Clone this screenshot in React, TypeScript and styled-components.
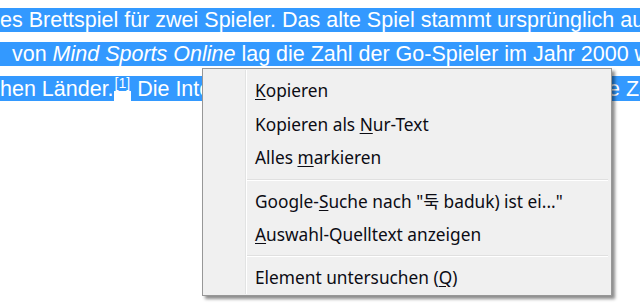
import React from "react";
import styled, { createGlobalStyle } from "styled-components";

const GlobalStyle = createGlobalStyle`
  html, body {
    margin: 0;
    padding: 0;
    background: #ffffff;
    overflow: hidden;
  }
`;

const Page = styled.div`
  position: relative;
  width: 640px;
  height: 308px;
  overflow: hidden;
  background: #ffffff;
`;

const Article = styled.div`
  padding-top: 8px;
  font-family: "Liberation Sans", Arial, sans-serif;
  font-size: 21.5px;
  color: #ffffff;
`;

const Line = styled.div`
  height: 34px;
  white-space: pre;
  overflow: hidden;
`;

const Sel = styled.span`
  background: #3399ff;
  color: #ffffff;
  padding: 1px 0 0 0;
`;

const Sup = styled.sup`
  font-size: 14px;
  line-height: 1;
  vertical-align: 8px;
  padding: 0 1px;
  background: #3399ff;
`;

const Menu = styled.div`
  position: absolute;
  left: 202px;
  top: 68px;
  width: 408px;
  padding: 5px 0 1px 0;
  background: #f0f0f0;
  border: 1px solid #979797;
  box-shadow: 3px 3px 3px rgba(0, 0, 0, 0.45);
  font-family: "Noto Sans", "Noto Sans CJK KR", sans-serif;
  font-size: 17.3px;
  color: #0c0c14;

  &::before {
    content: "";
    position: absolute;
    left: 42px;
    top: 1px;
    bottom: 1px;
    width: 1px;
    background: #e2e3e3;
    border-right: 1px solid #ffffff;
  }
`;

const Item = styled.div`
  height: 33.5px;
  display: flex;
  align-items: center;
  padding-left: 52px;
  white-space: nowrap;
`;

const Separator = styled.div`
  margin: 4px 3px 3.5px 44px;
  height: 1px;
  background: #e0e0e0;
  border-bottom: 1px solid #ffffff;
`;

const Key = styled.span`
  text-decoration: underline;
  text-underline-offset: 2px;
`;

export default function App() {
  return (
    <Page>
      <GlobalStyle />
      <Article>
        <Line>
          <Sel>es Brettspiel für zwei Spieler. Das alte Spiel stammt ursprünglich aus China</Sel>
        </Line>
        <Line>
          <Sel>
            {"  von "}<i>Mind Sports Online</i> lag die Zahl der Go-Spieler im Jahr 2000 weltweit
          </Sel>
        </Line>
        <Line>
          <Sel>hen Länder.</Sel>
          <Sup>[1]</Sup>
          <Sel> Die Internationale Go-Föderation hat Mitglieder die Zahl</Sel>
        </Line>
      </Article>
      <Menu>
        <Item>
          <span><Key>K</Key>opieren</span>
        </Item>
        <Item>
          <span>Kopieren als <Key>N</Key>ur-Text</span>
        </Item>
        <Item>
          <span>Alles <Key>m</Key>arkieren</span>
        </Item>
        <Separator />
        <Item>
          <span>Google-<Key>S</Key>uche nach "둑 baduk) ist ei..."</span>
        </Item>
        <Item>
          <span><Key>A</Key>uswahl-Quelltext anzeigen</span>
        </Item>
        <Separator />
        <Item>
          <span>Element untersuchen (<Key>Q</Key>)</span>
        </Item>
      </Menu>
    </Page>
  );
}
